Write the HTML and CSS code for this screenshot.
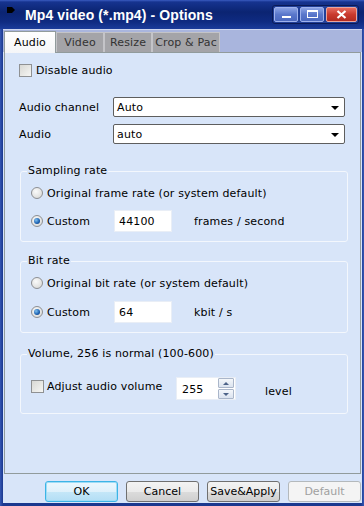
FILE: index.html
```html
<!DOCTYPE html>
<html lang="en">
<head>
    <meta charset="UTF-8">
    <title>Mp4 video (*.mp4) - Options</title>
    <link rel="stylesheet" href="styles.css">
</head>
<body>
<div class="window">
    <div class="titlebar">
        <svg class="appicon" width="8" height="6" viewBox="0 0 8 6"><polygon points="0,0 5,0 8,3 5,6 0,6" fill="#000"/></svg>
        <span class="title">Mp4 video (*.mp4) - Options</span>
        <div class="capbtns">
            <span class="cap min"><i></i></span>
            <span class="cap max"><i></i></span>
            <span class="cap close">
                <svg width="11" height="9" viewBox="0 0 11 9"><path d="M1.5 1 L9.5 8 M9.5 1 L1.5 8" stroke="#fff" stroke-width="2.2"/></svg>
            </span>
        </div>
    </div>
    <div class="client">
        <div class="tabs">
            <span class="tab active">Audio</span>
            <span class="tab tab-video">Video</span>
            <span class="tab tab-resize">Resize</span>
            <span class="tab tab-crop">Crop &amp; Pac</span>
        </div>
        <div class="page">
            <div class="check-row"><span class="check"></span>Disable audio</div>

            <div class="field-row first"><span class="field-label">Audio channel</span><div class="combo">Auto<span class="arrow"></span></div></div>
            <div class="field-row"><span class="field-label">Audio</span><div class="combo">auto<span class="arrow"></span></div></div>

            <fieldset class="group sampling">
                <legend>Sampling rate</legend>
                <div class="opt-row top"><span class="radio"></span>Original frame rate (or system default)</div>
                <div class="opt-row bottom"><span class="opt"><span class="radio on"></span>Custom</span><span class="textbox">44100</span><span class="unit">frames / second</span></div>
            </fieldset>

            <fieldset class="group bitrate">
                <legend>Bit rate</legend>
                <div class="opt-row top"><span class="radio"></span>Original bit rate (or system default)</div>
                <div class="opt-row bottom wide"><span class="opt"><span class="radio on"></span>Custom</span><span class="textbox">64</span><span class="unit">kbit / s</span></div>
            </fieldset>

            <fieldset class="group volume">
                <legend>Volume, 256 is normal (100-600)</legend>
                <div class="opt-row vol-row">
                    <span class="vol-label"><span class="check"></span>Adjust audio volume</span>
                    <span class="spin"><span class="spin-value">255</span><span class="spin-btns"><span class="spin-btn up"></span><span class="spin-btn down"></span></span></span>
                    <span class="level">level</span>
                </div>
            </fieldset>
        </div>
        <div class="buttons">
            <span class="btn ok">OK</span>
            <span class="btn">Cancel</span>
            <span class="btn">Save&amp;Apply</span>
            <span class="btn disabled">Default</span>
        </div>
    </div>
</div>
</body>
</html>
```

FILE: styles.css
```css
*{
    margin: 0;
    padding: 0;
    box-sizing: border-box;
}
body{
    width: 364px;
    height: 506px;
    overflow: hidden;
    font-family: "DejaVu Sans", Verdana, sans-serif;
    font-size: 11px;
    letter-spacing: 0.15px;
    color: #000;
    background: #1a388f;
}
.window{
    width: 364px;
    height: 506px;
    display: flex;
    flex-direction: column;
    background: linear-gradient(to right, #3557b3 0, #1a388f 3px, #1a388f 361px, #3557b3 364px);
}

/* title bar */
.titlebar{
    height: 29px;
    flex: none;
    display: flex;
    align-items: center;
    padding: 0 5px 0 7px;
    background: linear-gradient(#3a5cc0 0, #16338f 2px, #0b2472 12px, #0f2b82 22px, #1b3c9a 29px);
}
.appicon{
    margin: -9px 10px 0 0;
}
.title{
    font-family: "Liberation Sans", Arial, sans-serif;
    font-weight: bold;
    font-size: 14px;
    letter-spacing: 0.1px;
    color: #fff;
    margin-top: 1px;
}
.capbtns{
    margin-left: auto;
    display: flex;
    gap: 2px;
    padding: 1px;
    border: 1px solid #0a1a56;
    border-radius: 3px;
    background: #213f98;
    margin-top: -1px;
}
.cap{
    height: 15px;
    width: 24px;
    border: 1px solid #9fb2ec;
    border-radius: 2px;
    background: linear-gradient(#8aa2e4, #5a77cb 50%, #4b69c0);
    display: flex;
    align-items: center;
    justify-content: center;
}
.cap.min i{
    width: 9px;
    height: 2px;
    background: #fff;
    margin-top: 6px;
}
.cap.max i{
    width: 11px;
    height: 8px;
    border: 1px solid #fff;
    border-top-width: 2px;
}
.cap.close{
    width: 31px;
    border-color: #e9a59c;
    background: linear-gradient(#e66a5e, #c93a2e 50%, #b32a20);
}

/* client area */
.client{
    flex: 1;
    margin: 0 2px 3px 3px;
    display: flex;
    flex-direction: column;
    background: #d8e5f9;
}
.tabs{
    height: 23px;
    flex: none;
    display: flex;
    align-items: flex-end;
    padding-left: 1px;
    background: #a9b5dd;
    border-top: 1px solid #cdd6ef;
}
.tab{
    height: 20px;
    display: flex;
    align-items: center;
    justify-content: center;
    background: #a4a4a8;
    border: 1px solid #c4c4c8;
    border-bottom: none;
    color: #333;
    overflow: hidden;
    white-space: nowrap;
}
.tab.active{
    width: 52px;
    height: 22px;
    margin-bottom: -1px;
    position: relative;
    z-index: 1;
    background: linear-gradient(#ffffff, #f4f5f8);
    border-color: #919b9c;
    color: #000;
    padding-bottom: 1px;
}
.tab-video{
    width: 48px;
}
.tab-resize{
    width: 48px;
}
.tab-crop{
    width: 68px;
}
.page{
    height: 422px;
    flex: none;
    margin: 0 1px;
    border: 1px solid #919b9c;
    background: #d8e5f9;
    padding: 9px 0 0 14px;
}
.check-row{
    display: flex;
    align-items: center;
    height: 16px;
}
.check{
    width: 13px;
    height: 13px;
    flex: none;
    border: 1px solid #8f9193;
    background: linear-gradient(135deg, #d8d8d4, #f6f6f4);
    margin-right: 4px;
}
.field-row{
    display: flex;
    align-items: center;
    height: 20px;
    margin-top: 7px;
}
.field-row.first{
    margin-top: 19px;
}
.field-label{
    width: 94px;
}
.combo{
    width: 232px;
    height: 20px;
    background: #fff;
    border: 1px solid #5e5e5e;
    border-radius: 2px;
    padding: 1px 0 0 3px;
    display: flex;
    align-items: center;
}
.arrow{
    margin-left: auto;
    margin-right: 5px;
    width: 0;
    height: 0;
    border-left: 4px solid transparent;
    border-right: 4px solid transparent;
    border-top: 4px solid #000;
}

/* group boxes */
.group{
    width: 328px;
    margin-left: 1px;
    border: 1px solid #f3f7fd;
    border-radius: 3px;
    padding: 0 0 9px 0;
}
.group legend{
    margin-left: 6px;
    padding: 0 1px;
    line-height: 14px;
}
.sampling{
    margin-top: 20px;
}
.bitrate{
    margin-top: 12px;
}
.volume{
    margin-top: 14px;
    padding-bottom: 13px;
}
.opt-row{
    display: flex;
    align-items: center;
    padding-left: 10px;
}
.opt-row.top{
    height: 16px;
    margin-top: 7px;
}
.opt-row.bottom{
    height: 22px;
    margin-top: 9px;
}
.opt-row.wide{
    margin-top: 10px;
}
.radio{
    width: 12px;
    height: 12px;
    flex: none;
    border-radius: 50%;
    border: 1px solid #8d8f93;
    background: radial-gradient(circle at 40% 35%, #fafafa, #d4d4d2);
    margin-right: 4px;
    display: flex;
    align-items: center;
    justify-content: center;
}
.radio.on::after{
    content: "";
    width: 6px;
    height: 6px;
    border-radius: 50%;
    background: radial-gradient(circle at 35% 35%, #7fc0f0, #1a5fb0 60%, #0b2f66);
}
.opt{
    width: 83px;
    display: flex;
    align-items: center;
}
.textbox{
    width: 58px;
    height: 22px;
    background: #fff;
    border: 1px solid #e9eef6;
    padding: 1px 0 0 4px;
    display: flex;
    align-items: center;
}
.unit{
    margin-left: 22px;
}
.vol-row{
    height: 23px;
    margin-top: 16px;
}
.vol-label{
    width: 145px;
    display: flex;
    align-items: center;
    margin-top: -4px;
}
.vol-label .check{
    margin-right: 3px;
}
.spin{
    width: 60px;
    height: 23px;
    background: #fff;
    border: 1px solid #e9eef6;
    display: flex;
    align-items: center;
    padding-left: 5px;
}
.spin-value{
    flex: 1;
    padding-top: 1px;
}
.spin-btns{
    display: flex;
    flex-direction: column;
    gap: 1px;
    margin-right: 1px;
}
.spin-btn{
    width: 16px;
    height: 10px;
    border: 1px solid #aab6ca;
    border-radius: 1px;
    background: linear-gradient(#f4f7fb, #dbe3ef);
    display: flex;
    align-items: center;
    justify-content: center;
}
.spin-btn::after{
    content: "";
    border-left: 3px solid transparent;
    border-right: 3px solid transparent;
}
.spin-btn.up::after{
    border-bottom: 3px solid #4d6388;
}
.spin-btn.down::after{
    border-top: 3px solid #4d6388;
}
.level{
    margin-left: 29px;
    margin-top: 5px;
}

/* bottom buttons */
.buttons{
    flex: 1;
    display: flex;
    justify-content: flex-end;
    align-items: flex-end;
    gap: 8px;
    padding: 0 1px 1px 0;
}
.btn{
    width: 73px;
    height: 21px;
    display: flex;
    align-items: center;
    justify-content: center;
    border: 1px solid #707070;
    border-radius: 3px;
    background: linear-gradient(#f3f3f3, #ebebeb 50%, #dcdcdc 51%, #cfcfcf);
    white-space: nowrap;
    letter-spacing: 0;
}
.btn.ok{
    border-color: #3cb4e6;
    background: linear-gradient(#ecf7fd, #dff1fb 50%, #c5e7f8 51%, #b3def5);
    box-shadow: inset 0 0 0 1px #9fdcf5;
}
.btn.disabled{
    border-color: #b4b9bc;
    background: #f4f4f4;
    color: #a0a0a0;
}
```
